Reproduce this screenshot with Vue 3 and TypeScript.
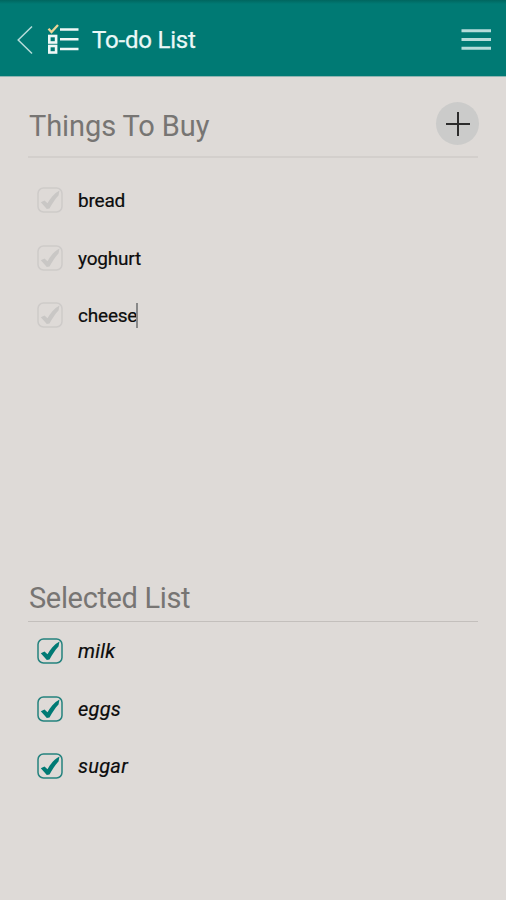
<script setup lang="ts">
import { ref } from 'vue'

interface Item {
  id: number
  label: string
  editing?: boolean
}

const pending = ref<Item[]>([
  { id: 1, label: 'bread' },
  { id: 2, label: 'yoghurt' },
  { id: 3, label: 'cheese', editing: true },
])

const selected = ref<Item[]>([
  { id: 4, label: 'milk' },
  { id: 5, label: 'eggs' },
  { id: 6, label: 'sugar' },
])

function moveItem(item: Item, from: Item[], to: Item[]) {
  const index = from.indexOf(item)
  if (index >= 0) to.push(...from.splice(index, 1))
}

function addItem() {
  pending.value.push({ id: Date.now(), label: '' })
}
</script>

<template>
  <div class="screen">
    <header class="bar">
      <svg class="back" width="18" height="30" viewBox="0 0 18 30">
        <path d="M16 1.500 2.200 15l13.800 13.500" />
      </svg>
      <svg class="logo" width="34" height="32" viewBox="0 0 34 32">
        <path class="lines" d="M13 5.500H31.500M13 15.300H31.500M13 25H31.500" />
        <rect class="box" x="2.300" y="12" width="6.800" height="6.500" />
        <rect class="box" x="2.300" y="22" width="6.800" height="6.500" />
        <path class="tick" d="M1.500 4.800 4.500 8.100 11 1" />
      </svg>
      <h1 class="title">To-do List</h1>
      <svg class="menu" width="30" height="24" viewBox="0 0 30 24">
        <path d="M0.500 2.700H30M0.500 11.500H30M0.500 20.300H30" />
      </svg>
    </header>

    <main class="content">
      <section class="section">
        <div class="heading">
          <h2 class="caption">Things To Buy</h2>
          <button class="add" type="button" @click="addItem">
            <svg width="24" height="24" viewBox="0 0 24 24">
              <path d="M0 12H24M12 0V24" />
            </svg>
          </button>
        </div>
        <ul class="list">
          <li v-for="item in pending" :key="item.id" class="row" @click="moveItem(item, pending, selected)">
            <svg class="check" width="26" height="26" viewBox="0 0 26 26">
              <rect x="1" y="1" width="24" height="24" rx="5.500" />
              <path d="M3.800 15.300 7.500 13.500 10.500 16.300C13 11.500 17 6.500 22.500 3.500L21.500 8.500C18 12 15.500 16.500 12.500 21.500L9.800 22Z" />
            </svg>
            <span class="label">{{ item.label }}</span>
            <span v-if="item.editing" class="caret"></span>
          </li>
        </ul>
      </section>

      <section class="section chosen">
        <div class="heading">
          <h2 class="caption">Selected List</h2>
        </div>
        <ul class="list">
          <li v-for="item in selected" :key="item.id" class="row" @click="moveItem(item, selected, pending)">
            <svg class="check" width="26" height="26" viewBox="0 0 26 26">
              <rect x="1" y="1" width="24" height="24" rx="5.500" />
              <path d="M3.800 15.300 7.500 13.500 10.500 16.300C13 11.500 17 6.500 22.500 3.500L21.500 8.500C18 12 15.500 16.500 12.500 21.500L9.800 22Z" />
            </svg>
            <span class="label">{{ item.label }}</span>
          </li>
        </ul>
      </section>
    </main>
  </div>
</template>

<style>
body {
  margin: 0;
  background: #dedad7;
}
</style>

<style scoped>
.screen {
  width: 506px;
  height: 900px;
  overflow: hidden;
  background: #dedad7;
  font-family: Roboto, sans-serif;
}

.bar {
  display: flex;
  align-items: center;
  box-sizing: border-box;
  height: 77px;
  padding: 3px 15px 0 16px;
  border-bottom: 1px solid #8fb5b2;
  background: linear-gradient(#00665f, #007a74 4px);
}

.back path {
  fill: none;
  stroke: #b5dcda;
  stroke-width: 1.5;
}

.logo {
  margin-left: 13px;
}

.logo path,
.logo .box {
  fill: none;
  stroke: #eef7f5;
  stroke-width: 2.4;
}

.logo .box {
  stroke-width: 2.6;
}

.logo .tick {
  stroke: #ecd596;
  stroke-width: 2.3;
}

.title {
  flex: 1;
  margin: 0 0 0 11px;
  color: #eaf8f7;
  font-size: 24px;
  font-weight: 400;
  letter-spacing: -0.2px;
  line-height: 30px;
  -webkit-text-stroke: 0.25px #eaf8f7;
}

.menu path {
  stroke: #b5dcda;
  stroke-width: 3;
}

.content {
  padding: 0 28px;
}

.heading {
  display: flex;
  align-items: center;
  justify-content: space-between;
  box-sizing: border-box;
  height: 81px;
  padding-top: 14px;
  border-bottom: 2px solid #d3cfcc;
}

.caption {
  margin: 4px 0 0 1px;
  color: #777573;
  font-size: 29px;
  font-weight: 400;
  letter-spacing: -0.1px;
  line-height: 36px;
}

.add {
  display: flex;
  align-items: center;
  justify-content: center;
  width: 43px;
  height: 43px;
  margin-right: -1px;
  padding: 0;
  border: 0;
  border-radius: 50%;
  background: #cbcbca;
}

.add path {
  stroke: #2c2c2c;
  stroke-width: 2;
}

.list {
  margin: 0;
  padding: 13px 0 0 9px;
  list-style: none;
}

.row {
  display: flex;
  align-items: center;
  height: 57.8px;
}

.check rect {
  fill: none;
  stroke: #cecbc9;
  stroke-width: 1.5;
}

.check path {
  fill: #c9c7c5;
}

.label {
  margin: 2px 0 0 15px;
  color: #0c0c0c;
  font-size: 19px;
  letter-spacing: -0.2px;
  line-height: 26px;
  -webkit-text-stroke: 0.2px #0c0c0c;
}

.caret {
  width: 1.5px;
  height: 25px;
  margin-left: -1px;
  background: #888;
}

.chosen {
  margin-top: 234px;
}

.chosen .heading {
  height: 43.5px;
  padding-top: 0;
  border-bottom: 1.5px solid #c3bfbc;
}

.chosen .caption {
  margin-top: -4px;
  letter-spacing: -0.35px;
}

.chosen .list {
  padding-top: 0;
}

.chosen .check rect {
  stroke: #24827e;
}

.chosen .check path {
  fill: #007a74;
}

.chosen .label {
  margin-top: 0;
  font-size: 20px;
  font-style: italic;
  letter-spacing: 0.25px;
}
</style>
